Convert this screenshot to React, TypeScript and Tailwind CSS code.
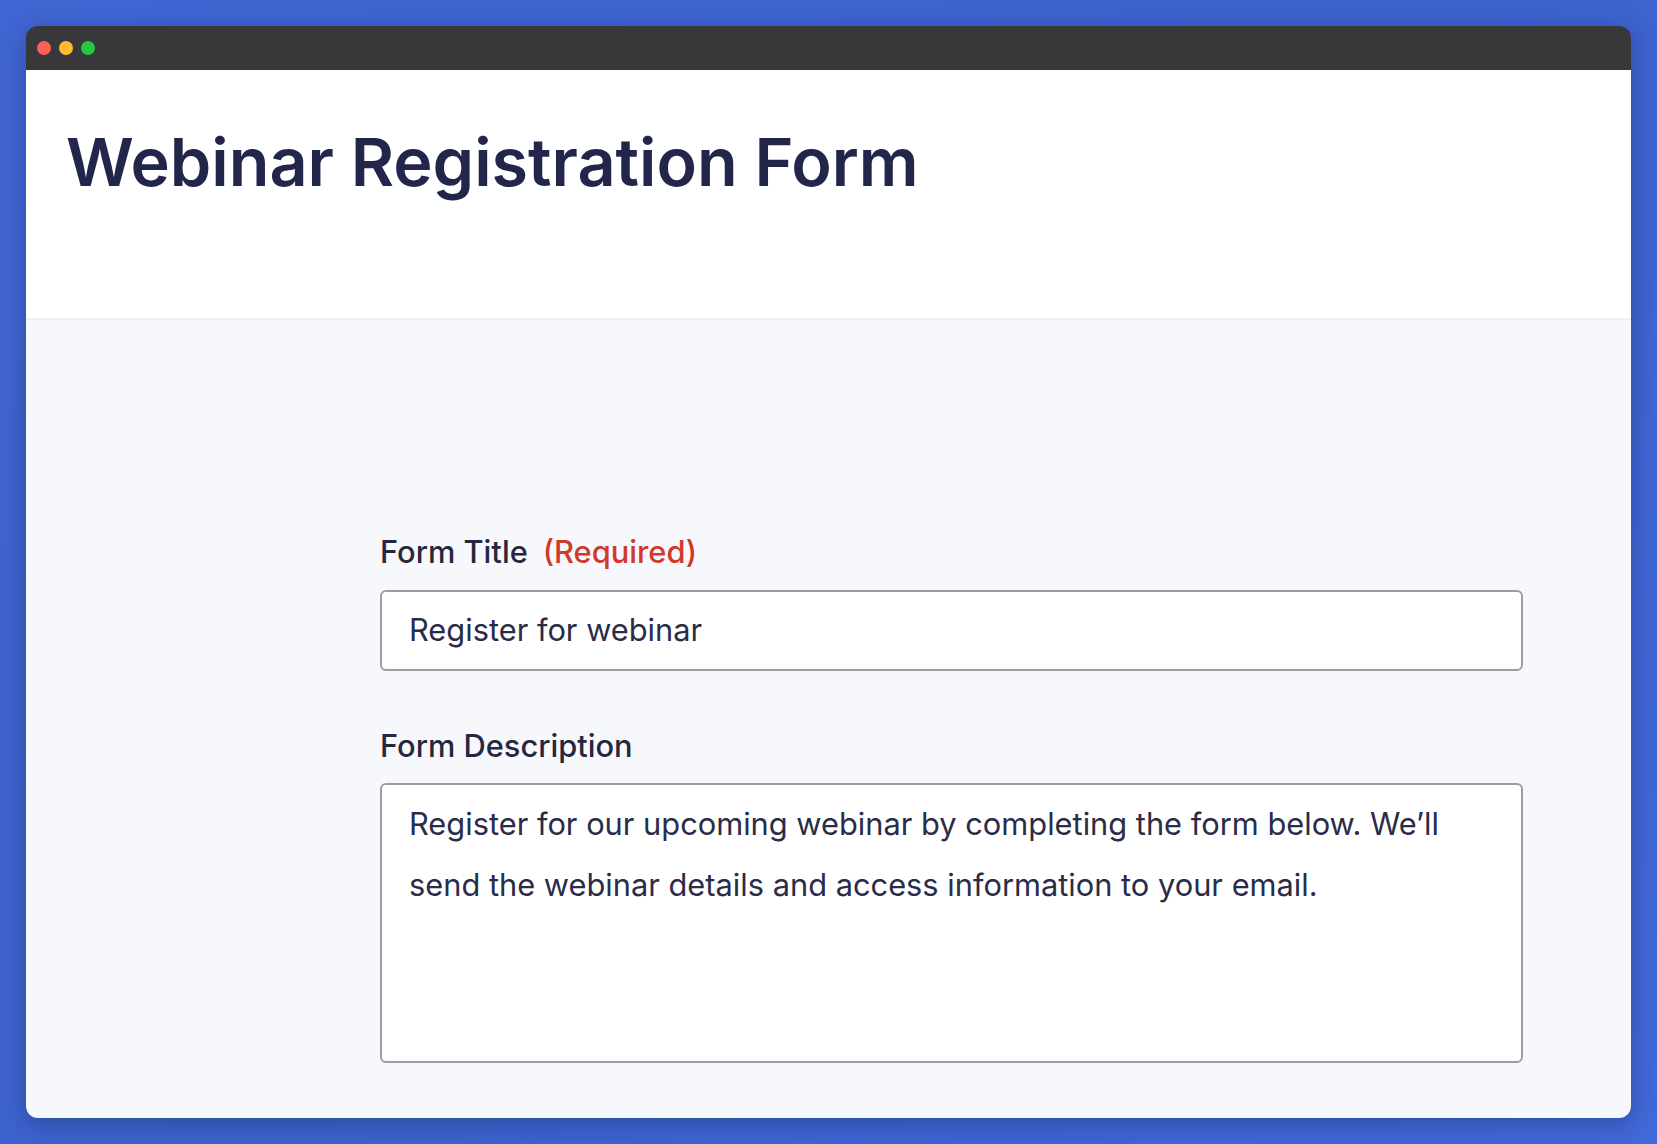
export default function App() {
  return (
    <div className="w-[1657px] h-[1144px] bg-[linear-gradient(135deg,#4066d3,#3c62cc_50%,#4169d8)] p-[26px] font-['Inter',sans-serif]">
      <div className="h-full flex flex-col rounded-[12px] overflow-hidden shadow-[0_6px_24px_rgba(20,30,80,0.35)]">
        <div className="h-[44px] shrink-0 bg-[#38383a] flex items-center gap-[8px] pl-[11px]">
          <span className="w-[14px] h-[14px] rounded-full bg-[#fe5f57]" />
          <span className="w-[14px] h-[14px] rounded-full bg-[#febc2e]" />
          <span className="w-[14px] h-[14px] rounded-full bg-[#28c840]" />
        </div>
        <div className="h-[250px] shrink-0 bg-white border-b-2 border-[#eef0f4] pl-[40px] pt-[52px]">
          <h1 className="text-[66.5px] leading-[80px] font-semibold text-[#23264b]">
            Webinar Registration Form
          </h1>
        </div>
        <div className="flex-1 bg-[#f7f8fb] pl-[354px] pr-[108px] pt-[212px]">
          <div className="flex items-baseline gap-[15px] text-[30.8px] leading-[40px] font-medium">
            <span className="text-[#26283f]">Form Title</span>
            <span className="text-[#d1392a]">(Required)</span>
          </div>
          <div className="mt-[18px] h-[81px] bg-white border-2 border-[#9c9ca6] rounded-[6px] flex items-center px-[27px] text-[30.8px] text-[#2a2c48]">
            Register for webinar
          </div>
          <div className="mt-[55px] text-[30.8px] leading-[40px] font-medium text-[#26283f]">
            Form Description
          </div>
          <div className="mt-[17px] h-[280px] bg-white border-2 border-[#9c9ca6] rounded-[6px] px-[27px] pt-[8px] text-[30.8px] leading-[61px] text-[#2a2c48]">
            Register for our upcoming webinar by completing the form below. We’ll send the webinar details and access information to your email.
          </div>
        </div>
      </div>
    </div>
  );
}
